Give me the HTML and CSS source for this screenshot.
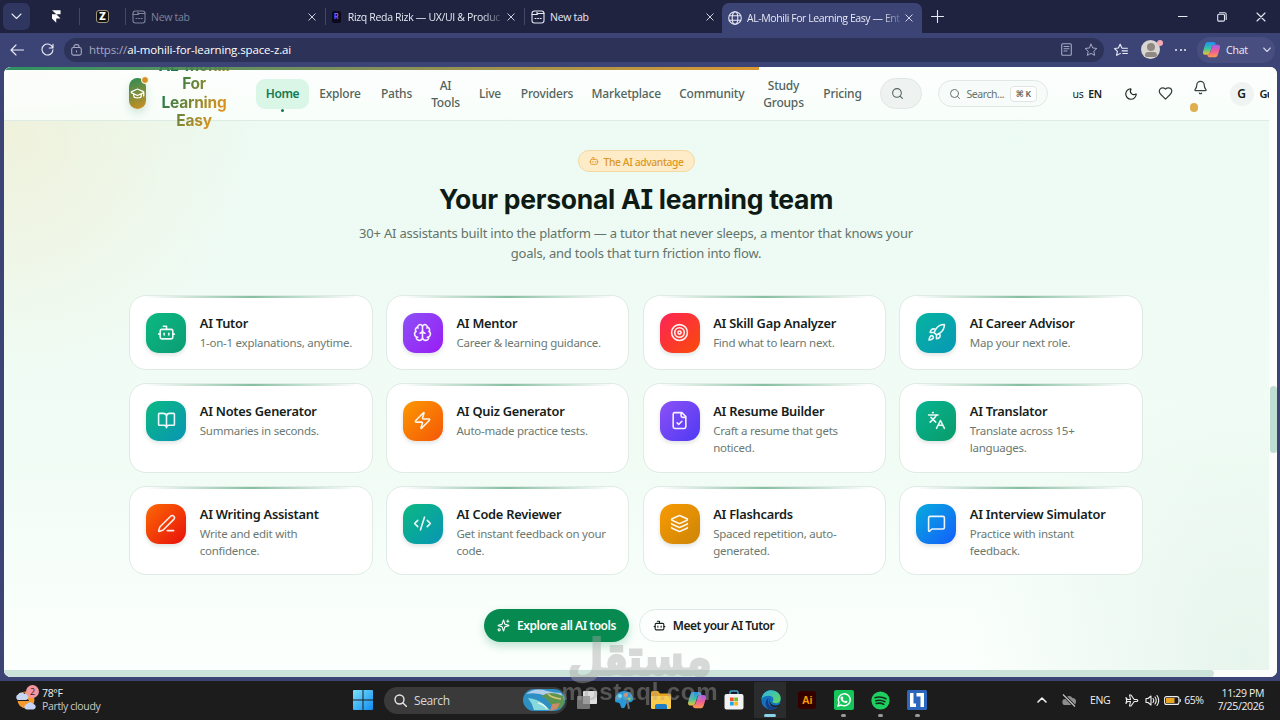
FILE: index.html
```html
<!DOCTYPE html>
<html lang="en">
<head>
<meta charset="utf-8">
<title>AL-Mohili For Learning Easy</title>
<link rel="stylesheet" href="styles.css">
</head>
<body>
<svg class="defs" width="0" height="0">
  <defs>
    <linearGradient id="copilotA" x1="0" y1="0" x2="0" y2="1"><stop offset="0" stop-color="#1f8df5"/><stop offset=".5" stop-color="#35c3a8"/><stop offset="1" stop-color="#f2c230"/></linearGradient>
    <linearGradient id="copilotB" x1="0" y1="0" x2="0" y2="1"><stop offset="0" stop-color="#a35cf0"/><stop offset=".5" stop-color="#ef5c9a"/><stop offset="1" stop-color="#fb9a4b"/></linearGradient>
    <linearGradient id="edgeA" x1="0" y1="0" x2="1" y2="1"><stop offset="0" stop-color="#2bb5e8"/><stop offset="1" stop-color="#62d957"/></linearGradient>
    <linearGradient id="winA" x1="0" y1="0" x2="1" y2="1"><stop offset="0" stop-color="#7be0fb"/><stop offset="1" stop-color="#0f8df0"/></linearGradient>
  </defs>
  <symbol id="bot" viewBox="0 0 24 24"><path d="M12 8V4H8"/><rect width="16" height="12" x="4" y="8" rx="2"/><path d="M2 14h2M20 14h2M15 13v2M9 13v2"/></symbol>
  <symbol id="brain" viewBox="0 0 24 24"><path d="M12 18V5M15 13a4.17 4.17 0 0 1-3-4 4.17 4.17 0 0 1-3 4M17.598 6.5A3 3 0 1 0 12 5a3 3 0 1 0-5.598 1.5M17.997 5.125a4 4 0 0 1 2.526 5.77M18 18a4 4 0 0 0 2-7.464M19.967 17.483A4 4 0 1 1 12 18a4 4 0 1 1-7.967-.517M6 18a4 4 0 0 1-2-7.464M6.003 5.125a4 4 0 0 0-2.526 5.77"/></symbol>
  <symbol id="target" viewBox="0 0 24 24"><circle cx="12" cy="12" r="10"/><circle cx="12" cy="12" r="6"/><circle cx="12" cy="12" r="2"/></symbol>
  <symbol id="rocket" viewBox="0 0 24 24"><path d="M4.5 16.5c-1.5 1.26-2 5-2 5s3.74-.5 5-2c.71-.84.7-2.13-.09-2.91a2.18 2.18 0 0 0-2.91-.09zM12 15l-3-3a22 22 0 0 1 2-3.95A12.88 12.88 0 0 1 22 2c0 2.72-.78 7.5-6 11a22.35 22.35 0 0 1-4 2zM9 12H4s.55-3.03 2-4c1.62-1.08 5 0 5 0M12 15v5s3.03-.55 4-2c1.08-1.62 0-5 0-5"/></symbol>
  <symbol id="book" viewBox="0 0 24 24"><path d="M12 7v14M3 18a1 1 0 0 1-1-1V4a1 1 0 0 1 1-1h5a4 4 0 0 1 4 4 4 4 0 0 1 4-4h5a1 1 0 0 1 1 1v13a1 1 0 0 1-1 1h-6a3 3 0 0 0-3 3 3 3 0 0 0-3-3z"/></symbol>
  <symbol id="zap" viewBox="0 0 24 24"><path d="M4 14a1 1 0 0 1-.78-1.63l9.9-10.2a.5.5 0 0 1 .86.46l-1.92 6.02A1 1 0 0 0 13 10h7a1 1 0 0 1 .78 1.63l-9.9 10.2a.5.5 0 0 1-.86-.46l1.92-6.02A1 1 0 0 0 11 14z"/></symbol>
  <symbol id="file" viewBox="0 0 24 24"><path d="M15 2H6a2 2 0 0 0-2 2v16a2 2 0 0 0 2 2h12a2 2 0 0 0 2-2V7ZM14 2v4a2 2 0 0 0 2 2h4M9 15l2 2 4-4"/></symbol>
  <symbol id="lang" viewBox="0 0 24 24"><path d="m5 8 6 6M4 14l6-6 2-3M2 5h12M7 2h1M22 22l-5-10-5 10M14 18h6"/></symbol>
  <symbol id="pen" viewBox="0 0 24 24"><path d="M13 21h8M21.174 6.812a1 1 0 0 0-3.986-3.987L3.842 16.174a2 2 0 0 0-.5.83l-1.321 4.352a.5.5 0 0 0 .623.622l4.353-1.32a2 2 0 0 0 .83-.497z"/></symbol>
  <symbol id="code" viewBox="0 0 24 24"><path d="m18 16 4-4-4-4M6 8l-4 4 4 4M14.5 4l-5 16"/></symbol>
  <symbol id="layers" viewBox="0 0 24 24"><path d="M12.83 2.18a2 2 0 0 0-1.66 0L2.6 6.08a1 1 0 0 0 0 1.83l8.58 3.91a2 2 0 0 0 1.66 0l8.58-3.9a1 1 0 0 0 0-1.83zM2 12a1 1 0 0 0 .58.91l8.6 3.91a2 2 0 0 0 1.65 0l8.58-3.9A1 1 0 0 0 22 12M2 17a1 1 0 0 0 .58.91l8.6 3.91a2 2 0 0 0 1.65 0l8.58-3.9A1 1 0 0 0 22 17"/></symbol>
  <symbol id="message" viewBox="0 0 24 24"><path d="M22 17a2 2 0 0 1-2 2H6.828a2 2 0 0 0-1.414.586l-2.202 2.202A.71.71 0 0 1 2 21.286V5a2 2 0 0 1 2-2h16a2 2 0 0 1 2 2z"/></symbol>
  <symbol id="sparkles" viewBox="0 0 24 24"><path d="M9.937 15.5A2 2 0 0 0 8.5 14.063l-6.135-1.582a.5.5 0 0 1 0-.962L8.5 9.936A2 2 0 0 0 9.937 8.5l1.582-6.135a.5.5 0 0 1 .963 0L14.063 8.5A2 2 0 0 0 15.5 9.937l6.135 1.581a.5.5 0 0 1 0 .964L15.5 14.063a2 2 0 0 0-1.437 1.437l-1.582 6.135a.5.5 0 0 1-.963 0zM20 2v4M22 4h-4"/><circle cx="4" cy="20" r="2"/></symbol>
  <symbol id="search" viewBox="0 0 24 24"><circle cx="11" cy="11" r="8"/><path d="m21 21-4.3-4.3"/></symbol>
  <symbol id="x" viewBox="0 0 10 10"><path d="M1 1l8 8M9 1l-8 8"/></symbol>
  <symbol id="newtab" viewBox="0 0 14 14"><rect x="1" y="1" width="12" height="12" rx="2.5"/><path d="M1 4.500h5l1-1h6M6 4.500V2M4 8.500h1M6.600 8.500h1M9.200 8.500h1"/></symbol>
  <symbol id="copilot" viewBox="0 0 20 20"><path fill="url(#copilotA)" stroke="none" d="M6 2h6c1.500 0 2 .8 2.300 2l.3 1h-2c-1.500 0-2 1-2.500 2.600L8.600 12.500C8 14.500 7 15.500 5.200 15.500H3.500C1 15.500.6 13.800 1.300 11.500L3.200 5C3.800 3 4.500 2 6 2z"/><path fill="url(#copilotB)" stroke="none" d="M14 18.200H8.300c-1.500 0-2.200-.8-2.600-2.200l-.2-.6c1.800 0 2.900-1 3.400-2.800l1.500-5C10.900 5.800 11.800 5 13.500 5h3c2.500 0 2.900 1.700 2.200 4L16.800 15.300c-.6 2-1.300 2.900-2.800 2.900z"/></symbol>
</svg>

<div class="tabstrip">
  <span class="tab-menu"><svg class="i" width="11" height="7" viewBox="0 0 11 7"><path d="M1 1l4.500 4.500L10 1"/></svg></span>
  <span class="pin"><svg width="9" height="13" viewBox="0 0 10 14"><path fill="#fff" d="M0 0h9.500v4.600H4.800L9.500 9.200H4.700V14L0 9.200V4.600h4.800z"/></svg></span>
  <i class="sep"></i>
  <span class="pin"><span class="zlogo">Z</span></span>
  <i class="sep"></i>
  <div class="tab t1 muted"><svg class="i" width="14" height="14"><use href="#newtab"/></svg><span class="lbl">New tab</span><svg class="i cx" width="8" height="8"><use href="#x"/></svg></div>
  <i class="sep"></i>
  <div class="tab t2"><span class="rlogo">R</span><span class="lbl fade">Rizq Reda Rizk — UX/UI &amp; Produc</span><svg class="i cx" width="8" height="8"><use href="#x"/></svg></div>
  <i class="sep"></i>
  <div class="tab t3"><svg class="i" width="14" height="14"><use href="#newtab"/></svg><span class="lbl">New tab</span><svg class="i cx" width="8" height="8"><use href="#x"/></svg></div>
  <div class="tab t4"><svg class="i" width="14" height="14" viewBox="0 0 14 14"><circle cx="7" cy="7" r="6.300"/><ellipse cx="7" cy="7" rx="2.800" ry="6.300"/><path d="M1.200 4.800h11.600M1.200 9.200h11.600"/></svg><span class="lbl fade">AL-Mohili For Learning Easy — Ent</span><svg class="i cx" width="8" height="8"><use href="#x"/></svg></div>
  <svg class="i plus" width="13" height="13" viewBox="0 0 13 13"><path d="M6.500 .5v12M.5 6.500h12"/></svg>
  <div class="winctl">
    <svg class="i" width="10" height="10" viewBox="0 0 10 10"><path d="M0 4.500h9"/></svg>
    <svg class="i" width="10" height="10" viewBox="0 0 10 10"><rect x=".7" y="2.300" width="6.800" height="6.800" rx="1.200"/><path d="M2.500 .7H7.500a1.700 1.700 0 0 1 1.700 1.700V7.400"/></svg>
    <svg class="i" width="10" height="10"><use href="#x"/></svg>
  </div>
</div>

<div class="toolbar">
  <svg class="i" width="14" height="12" viewBox="0 0 14 12"><path d="M13.500 6H1M6 1L1 6l5 5"/></svg>
  <svg class="i" width="13" height="13" viewBox="0 0 13 13"><path d="M11.800 5A5.500 5.500 0 1 0 12 6.700M12 1.200V5H8.200"/></svg>
  <div class="address">
    <svg class="i dim" width="11" height="12" viewBox="0 0 11 12"><rect x=".7" y="3.500" width="9.600" height="7.600" rx="1.800"/><path d="M3 3.500V2.600a2 2 0 0 1 2-2h1a2 2 0 0 1 2 2v.9M5.500 6.700v1.200"/></svg>
    <span class="url"><span>https://</span>al-mohili-for-learning.space-z.ai</span>
    <svg class="i dim" width="11" height="13" viewBox="0 0 11 13"><rect x=".7" y=".7" width="9.600" height="11.600" rx="1"/><path d="M3 3.500h5M3 5.800h5M3 8h3"/></svg>
    <svg class="i dim" width="14" height="14" viewBox="0 0 24 24"><path stroke-width="1.700" d="M12 2l3 6.500 7 .9-5.200 4.800 1.400 7L12 17.800 5.800 21.200l1.400-7L2 9.400l7-.9z"/></svg>
  </div>
  <svg class="i" width="14" height="14" viewBox="0 0 24 24"><path stroke-width="1.900" d="M15 9.200L13.500 8.500 10.500 2 7.500 8.500 1 9.400l4.800 4.800-1.300 7L11 17.800M15 9h8M14 13.500h9M15 18h8"/></svg>
  <span class="avatar"><i></i><b></b><em></em></span>
  <span class="dots"><i></i><i></i><i></i></span>
  <div class="chat"><svg width="19" height="19"><use href="#copilot"/></svg><span>Chat</span><svg class="i dim" width="8" height="6" viewBox="0 0 8 6"><path d="M.7 1L4 4.500 7.300 1"/></svg></div>
</div>

<div class="frame">
  <div class="viewport">
    <div class="page">
      <header class="nav">
        <div class="logo"><svg class="i" width="15" height="15" viewBox="0 0 24 24"><path stroke-width="2" d="M21.420 10.922a1 1 0 0 0-.019-1.838L12.830 5.180a2 2 0 0 0-1.660 0L2.600 9.080a1 1 0 0 0 0 1.832l8.570 3.908a2 2 0 0 0 1.660 0zM22 10v6M6 12.500V16a6 3 0 0 0 12 0v-3.500"/></svg><i></i></div>
        <div class="brand">AL-Mohili<br>For<br>Learning<br>Easy</div>
        <nav class="links">
          <a class="active">Home</a><a>Explore</a><a>Paths</a><a>AI<br>Tools</a><a>Live</a><a>Providers</a><a>Marketplace</a><a>Community</a><a>Study<br>Groups</a><a>Pricing</a>
        </nav>
        <span class="mini"><svg class="i" width="13" height="13"><use href="#search"/></svg></span>
        <div class="searchbox"><svg class="i" width="12" height="12"><use href="#search"/></svg><span>Search...</span><kbd>⌘ K</kbd></div>
        <span class="locale"><span>us</span> EN</span>
        <svg class="i moon" width="14" height="14" viewBox="0 0 24 24"><path d="M20.985 12.486a9 9 0 1 1-9.473-9.472c.405-.022.617.46.402.803a6 6 0 0 0 8.268 8.268c.344-.215.825-.004.803.401"/></svg>
        <svg class="i heart" width="15" height="15" viewBox="0 0 24 24"><path d="M19 14c1.490-1.460 3-3.210 3-5.500A5.500 5.500 0 0 0 16.500 3c-1.760 0-3 .5-4.500 2-1.500-1.500-2.740-2-4.500-2A5.500 5.500 0 0 0 2 8.500c0 2.300 1.500 4.050 3 5.500l7 7z"/></svg>
        <span class="bell"><svg class="i" width="15" height="15" viewBox="0 0 24 24"><path d="M10.268 21a2 2 0 0 0 3.464 0M3.262 15.326A1 1 0 0 0 4 17h16a1 1 0 0 0 .74-1.673C19.410 13.956 18 12.499 18 8A6 6 0 0 0 6 8c0 4.499-1.411 5.956-2.738 7.326"/></svg><i></i></span>
        <span class="user">G</span>
        <span class="uname">Gu</span>
      </header>

      <main>
        <div class="pill"><svg class="i" width="10" height="10"><use href="#bot"/></svg><span>The AI advantage</span></div>
        <h1>Your personal AI learning team</h1>
        <p class="lead">30+ AI assistants built into the platform — a tutor that never sleeps, a mentor that knows your<br>goals, and tools that turn friction into flow.</p>

        <div class="grid">
          <article class="card"><span class="tile emerald"><svg class="i" width="19" height="19"><use href="#bot"/></svg></span><div><h3>AI Tutor</h3><p>1-on-1 explanations, anytime.</p></div></article>
          <article class="card"><span class="tile violet"><svg class="i" width="19" height="19"><use href="#brain"/></svg></span><div><h3>AI Mentor</h3><p>Career &amp; learning guidance.</p></div></article>
          <article class="card"><span class="tile rose"><svg class="i" width="19" height="19"><use href="#target"/></svg></span><div><h3>AI Skill Gap Analyzer</h3><p>Find what to learn next.</p></div></article>
          <article class="card"><span class="tile teal"><svg class="i" width="19" height="19"><use href="#rocket"/></svg></span><div><h3>AI Career Advisor</h3><p>Map your next role.</p></div></article>
          <article class="card"><span class="tile sea"><svg class="i" width="19" height="19"><use href="#book"/></svg></span><div><h3>AI Notes Generator</h3><p>Summaries in seconds.</p></div></article>
          <article class="card"><span class="tile orange"><svg class="i" width="19" height="19"><use href="#zap"/></svg></span><div><h3>AI Quiz Generator</h3><p>Auto-made practice tests.</p></div></article>
          <article class="card"><span class="tile indigo"><svg class="i" width="19" height="19"><use href="#file"/></svg></span><div><h3>AI Resume Builder</h3><p>Craft a resume that gets<br>noticed.</p></div></article>
          <article class="card"><span class="tile green"><svg class="i" width="19" height="19"><use href="#lang"/></svg></span><div><h3>AI Translator</h3><p>Translate across 15+<br>languages.</p></div></article>
          <article class="card"><span class="tile red"><svg class="i" width="19" height="19"><use href="#pen"/></svg></span><div><h3>AI Writing Assistant</h3><p>Write and edit with<br>confidence.</p></div></article>
          <article class="card"><span class="tile sea"><svg class="i" width="19" height="19"><use href="#code"/></svg></span><div><h3>AI Code Reviewer</h3><p>Get instant feedback on your<br>code.</p></div></article>
          <article class="card"><span class="tile amber"><svg class="i" width="19" height="19"><use href="#layers"/></svg></span><div><h3>AI Flashcards</h3><p>Spaced repetition, auto-<br>generated.</p></div></article>
          <article class="card"><span class="tile blue"><svg class="i" width="19" height="19"><use href="#message"/></svg></span><div><h3>AI Interview Simulator</h3><p>Practice with instant<br>feedback.</p></div></article>
        </div>

        <div class="cta">
          <a class="btn primary"><svg class="i" width="13" height="13"><use href="#sparkles"/></svg><span>Explore all AI tools</span></a>
          <a class="btn ghost"><svg class="i" width="13" height="13"><use href="#bot"/></svg><span>Meet your AI Tutor</span></a>
        </div>
      </main>
    </div>
    <div class="vbar"><i></i></div>
    <div class="hbar"><i></i></div>
    <div class="progress"></div>
  </div>
</div>

<div class="taskbar">
  <div class="weather">
    <svg width="24" height="24" viewBox="0 0 24 24"><circle cx="11" cy="12" r="8.500" fill="#f29a2e"/><path fill="#1c1c1c" d="M2 13l7-9 5 9z"/><path fill="#c8d4f4" d="M3 12a3 3 0 0 1 0-5.500A4 4 0 0 1 9.500 6a3 3 0 0 1 1.500 6zM11.500 21.500a2.800 2.800 0 0 1 .5-5.500 4 4 0 0 1 6.500 0 2.800 2.800 0 0 1 0 5.500z"/></svg>
    <b class="badge">2</b>
    <div><span>78°F</span><span class="cloud">Partly cloudy</span></div>
  </div>
  <svg class="start" width="20" height="20" viewBox="0 0 20 20"><path fill="url(#winA)" d="M0 1q0-1 1-1h8.500v9.500H0zM10.500 0H19q1 0 1 1v8.500h-9.500zM0 10.500h9.500V20H1q-1 0-1-1zM10.500 10.500H20V19q0 1-1 1h-8.500z"/></svg>
  <div class="tsearch"><svg class="i" width="13" height="13" viewBox="0 0 13 13"><circle cx="5.500" cy="5.500" r="4.500"/><path d="M9 9l3.500 3.500"/></svg><span>Search</span>
    <svg class="scene" width="42" height="22" viewBox="0 0 42 22"><rect width="42" height="22" rx="11" fill="#2d8fc4"/><path d="M3 5Q12-2 24 2q8 2 14 2l3 5q-14 2-18-2Q14 3 3 5z" fill="#b4cde8"/><path d="M18 7q10-6 22 0l2 6-5 7q-6-4-11-6-1-4-8-7z" fill="#5d9550"/><path d="M25 5q4 4 13 5" stroke="#dcc47b" stroke-width="1.500" fill="none"/><path d="M5 9q9 1 14 5t8 7H11q-2-7-6-12z" fill="#87d9dc"/><path d="M15 14q6 1 9 6" stroke="#dff5ee" stroke-width="1.500" fill="none"/><path d="M29 15l8-1-3 6-7 2z" fill="#c88b65"/></svg>
  </div>
  <div class="apps">
    <span><svg width="20" height="20" viewBox="0 0 20 20"><rect x="0" y="6" width="13" height="13" rx="1" fill="#747474"/><rect x="6" y="1" width="14" height="13" rx="1" fill="#dedede"/><rect x="6" y="6" width="7" height="8" fill="#9d9d9d"/></svg></span>
    <span><svg width="20" height="20" viewBox="0 0 20 20"><path fill="#2997d8" d="M10 1c5 0 9 3 9 8 0 4-4 3-6 4s-1 6-5 5c-2-1-1-4-3-5-2-.5-4 0-4-3 0-5 4-9 9-9z"/><circle cx="6" cy="6" r="2" fill="#6fe0f8"/><circle cx="12" cy="5" r="2" fill="#f48752"/><circle cx="15" cy="9" r="1.800" fill="#70d777"/><path d="M13 9l2 10" stroke="#6b737b" stroke-width="2"/></svg></span>
    <span><svg width="20" height="20" viewBox="0 0 20 20"><path fill="#e7a321" d="M0 2.500q0-1.500 1.500-1.500H7l2 2.500h9.500Q20 3.500 20 5v3H0z"/><path fill="#fdcb4b" d="M0 6h20v11.500q0 1.500-1.500 1.500h-17Q0 19 0 17.500z"/><path fill="#1c7fc8" d="M4 19v-3q0-2 2-2h8q2 0 2 2v3z"/></svg></span>
    <span><svg width="20" height="20"><use href="#copilot"/></svg></span>
    <span><svg width="20" height="20" viewBox="0 0 20 20"><path d="M6 5V2.500Q6 1 7.500 1h5Q14 1 14 2.500V5" stroke="#3ba4d6" stroke-width="1.500" fill="none"/><rect y="4" x=".5" width="19" height="15.500" rx="2" fill="#f2f2f2"/><path fill="#f05125" d="M6 7.500h3.700v3.700H6z"/><path fill="#7cba28" d="M10.300 7.500H14v3.700h-3.700z"/><path fill="#22a3ea" d="M6 11.800h3.700v3.700H6z"/><path fill="#fdb813" d="M10.300 11.800H14v3.700h-3.700z"/></svg></span>
    <span class="on"><svg width="20" height="20" viewBox="0 0 20 20"><circle cx="10" cy="10" r="9.700" fill="#1671bf"/><path fill="url(#edgeA)" d="M.4 9.500C1 4 5 .3 10 .3c6 0 9.700 4 9.700 8 0 3-2 5-5 5-2 0-3.300-.8-3.300-1.500s1-1 1-2.600c0-2-2-3.500-4.700-3.500C4 5.700 1 7.500.4 9.500z"/><path fill="#123f88" d="M7.500 8c-2 6 2 10 8 9.500-2 2-5 2.500-7.500 1.800C4.500 17 3 11 7.500 8z"/><path fill="#1c1c1c" d="M9 8.500c-1.500 4 2 7.500 6.500 7 1.500-.2 2.700-.7 3.500-1.500.4 0 .2.500 0 1-3 3.500-8 2.500-9.800-.5C8 12.500 8 10 9 8.500z"/></svg></span>
    <span><b class="ai">Ai</b></span>
    <span class="run"><svg width="20" height="20" viewBox="0 0 20 20"><rect width="20" height="20" rx="2" fill="#15c45b"/><path d="M4 16l1-3.300A6 6 0 1 1 7.300 15z" fill="none" stroke="#fff" stroke-width="1.400"/><path fill="#fff" d="M7.500 6.500l1.200 0 .7 1.800-.7 1c.5 1 1.200 1.600 2.200 2l.9-.9 1.700.8c.1 1.200-1 2-2.200 1.800-2.700-.5-4.800-2.800-4.800-5 0-.8.500-1.400 1-1.500z"/></svg></span>
    <span class="run"><svg width="19" height="19" viewBox="0 0 20 20"><circle cx="10" cy="10" r="9.600" fill="#1ed05f"/><path d="M4.300 7q6-1.800 11.500 1.200M5 10.200q5-1.500 9.700 1.100M5.500 13.200q4.500-1.200 8 .9" stroke="#172b1d" stroke-width="1.600" stroke-linecap="round" fill="none"/></svg></span>
    <span class="run"><svg width="20" height="20" viewBox="0 0 20 20"><rect width="20" height="20" rx="1.500" fill="#2c67bd"/><path fill="#fff" d="M3 3h3.500v10.500H9V17H3zM9.500 3H17v14h-3.500V6.500h-4z"/></svg></span>
  </div>
  <div class="tray">
    <svg class="i up" width="10" height="6" viewBox="0 0 10 6"><path stroke-width="1.600" d="M1 5l4-4 4 4"/></svg>
    <svg class="off" width="14" height="13" viewBox="0 0 14 13"><path fill="#8c8c8c" d="M3.500 11a3 3 0 0 1-.3-6A4 4 0 0 1 10.500 4a3.500 3.500 0 0 1 0 7z"/><path d="M1 .5l12 12" stroke="#1c1c1c" stroke-width="3"/><path d="M1 .5l12 12" stroke="#ccc" stroke-width="1.100"/></svg>
    <span class="eng">ENG</span>
    <svg class="i plane" width="14" height="13" viewBox="0 0 14 13"><path d="M1 3.500l1.500 2h3L4.500 1H6l3.200 4.500h2.600a1 1 0 0 1 0 2H9.200L6 12H4.500l1-4.500h-3L1 9.500l.6-3z"/></svg>
    <svg class="i vol" width="15" height="13" viewBox="0 0 15 13"><path d="M1 4.500h2L6 2v9L3 8.500H1zM8 4.500q1.500 2 0 4M10 3q2.500 3.500 0 7M12 1.500q3.500 5 0 10"/></svg>
    <svg class="batt" width="17" height="9" viewBox="0 0 17 9"><rect x=".6" y=".6" width="14.300" height="7.800" rx="2" fill="none" stroke="#eee" stroke-width="1.100"/><rect x="2" y="2" width="8.500" height="5" fill="#eaa520"/><path d="M16.200 3v3" stroke="#eee" stroke-width="1.200"/></svg>
    <span class="pct">65%</span>
    <div class="clock"><span>11:29 PM</span><span>7/25/2026</span></div>
  </div>
</div>

<div class="watermark"><span class="ar" lang="ar">مستقل</span><span class="en">mostaql.com</span></div>
</body>
</html>
```
FILE: styles.css
```css
* { box-sizing: border-box; }
body { margin: 0; width: 1280px; height: 720px; overflow: hidden; display: flex; flex-direction: column; background: #3c4475; font-family: "Noto Sans", "Open Sans", sans-serif; }
h1, h3, p { margin: 0; }
.defs { position: absolute; }
.i { fill: none; stroke: currentColor; stroke-width: 1.1; stroke-linecap: round; stroke-linejoin: round; flex: none; }

/* Browser chrome */
.tabstrip { height: 33px; flex: none; display: flex; align-items: center; background: #1f2340; color: #e6e8f4; font: 10.5px "Open Sans", sans-serif; }
.tab-menu { width: 27px; height: 27px; margin: 0 13px 0 3px; border-radius: 6px; background: #2f3660; display: grid; place-items: center; }
.pin { width: 27px; display: grid; place-items: center; }
.sep { width: 1px; height: 17px; background: #424766; margin: 0 9px; flex: none; }
.sep + .tab { margin-left: -3px; }
.zlogo { width: 13px; height: 13px; border: 1px solid #a39a83; border-radius: 3px; background: #111; color: #fff; font: 900 10px/11px "Inter", sans-serif; text-align: center; }
.rlogo { width: 12px; height: 12px; border-radius: 2px; background: #0b0a1c; color: #8a5cf0; font: 700 7px/12px "Inter", sans-serif; text-align: center; }
.tab { display: flex; align-items: center; gap: 5px; height: 31px; flex: none; }
.tab .lbl { flex: 1; white-space: nowrap; letter-spacing: -.27px; }
.tab .fade { -webkit-mask-image: linear-gradient(90deg, #000 88%, rgba(0, 0, 0, .2)); mask-image: linear-gradient(90deg, #000 88%, rgba(0, 0, 0, .2)); }
.t1 { width: 184px; }
.t1.muted .lbl, .t1.muted > .i:first-child { color: #7e829a; }
.t2 { width: 183px; gap: 7px; }
.t2 .lbl { letter-spacing: -.32px; }
.tab.t4 .lbl { letter-spacing: -.42px; }
.t3 { width: 183px; }
.t4 { width: 200px; margin-left: 8px; padding: 0 9px 0 6px; background: #3c4475; border-radius: 7px 7px 0 0; align-self: flex-end; height: 30px; }
.plus { margin-left: 9px; }
.winctl { margin-left: auto; padding-right: 14px; display: flex; gap: 29px; }

.toolbar { height: 34px; flex: none; display: flex; align-items: center; padding: 0 0 1px 10px; gap: 17px; color: #eceef8; background: #3c4475; font: 11.500px "Open Sans", sans-serif; }
.address { width: 1040px; height: 24px; border-radius: 12px; background: #2d3358; display: flex; align-items: center; gap: 12px; padding: 0 6px 0 7px; margin-left: -7px; flex: none; }
.address .url { flex: 1; margin-left: -5px; letter-spacing: -.13px; color: #fff; }
.address .url span, .dim { color: #a5a9c3; }
.address + .i { margin-left: -7px; }
.avatar { position: relative; width: 19px; height: 19px; border-radius: 50%; background: #d9d6d1; display: flex; flex-direction: column; align-items: center; margin-left: -4px; flex: none; }
.avatar i { width: 8px; height: 8px; border-radius: 50%; background: #8f8883; margin-top: 3px; }
.avatar b { width: 12px; height: 5px; border-radius: 6px 6px 3px 3px; background: #8f8883; margin-top: 1px; }
.avatar em { position: absolute; right: -3px; top: 0; width: 6px; height: 6px; border-radius: 50%; background: #f5aab4; }
.dots { display: flex; gap: 2.500px; margin-left: -2px; }
.dots i { width: 2px; height: 2px; border-radius: 50%; background: #eceef8; }
.chat { width: 78px; height: 26px; border-radius: 13px; background: #484f80; display: flex; align-items: center; padding-left: 5px; gap: 5px; margin-left: -6px; font-size: 10.500px; letter-spacing: -.2px; flex: none; }
.chat .dim { margin-left: 10px; color: #cfd2e6; }

.frame { height: 614px; flex: none; padding: 0 3px 4px 4px; background: #3c4475; }
.viewport { position: relative; height: 610px; border-radius: 7px; overflow: hidden; background: #fff; display: grid; grid-template: 603px 7px / 1265px 8px; }
.progress { position: absolute; left: 0; top: 0; width: 755px; height: 3px; background: linear-gradient(90deg, #178453, #778447 50%, #d68d1d); opacity: .9; }
.vbar { padding-top: 319px; background: #fafdfc; grid-row: 1 / 3; grid-column: 2; }
.vbar i { display: block; height: 67px; width: 7px; margin-left: 1px; border-radius: 4px; background: #bfded2; }
.hbar { background: #fafdfc; grid-row: 2; grid-column: 1; }
.hbar i { display: block; width: 1210px; height: 7px; background: #cbe3d8; border-radius: 0 4px 4px 0; }
.page { overflow: hidden; background: radial-gradient(ellipse 250px 250px at 0 65px, rgba(244, 228, 184, .4), transparent), radial-gradient(ellipse 270px 260px at 1240px 590px, rgba(210, 235, 221, .5), transparent), linear-gradient(#ebfaf2 0, #eefbf4 180px, #f1fcf5 400px, #fafffc 560px, #fbfffd); }

/* Site header */
.nav { height: 54px; display: flex; align-items: center; padding-left: 125px; background: linear-gradient(rgba(255, 255, 255, .9), rgba(250, 255, 252, .8)); border-bottom: 1px solid #dcebe3; color: #53635b; font-size: 12px; font-weight: 500; }
.nav > * { flex: none; }
.logo { position: relative; width: 17px; height: 31px; border-radius: 8.500px; background: linear-gradient(160deg, #2b8b56, #d08f20); display: grid; place-items: center; color: #fff; box-shadow: 0 4px 8px rgba(30, 130, 80, .2); }
.logo i { position: absolute; right: -3px; top: -2px; width: 8px; height: 8px; border-radius: 50%; background: #d7921f; border: 1px solid #fff; }
.brand { width: 94px; margin: 0 8px 0 1px; text-align: center; font: 700 15.500px/18.500px "Inter", sans-serif; letter-spacing: -.25px; color: transparent; background: linear-gradient(120deg, #16794c 25%, #d9921c 75%); -webkit-background-clip: text; background-clip: text; }
.links { display: grid; grid-template-columns: 53px 62px 51px 47px 42px 72px 86.500px 84.500px 59px 59px; align-items: center; text-align: center; line-height: 16.500px; letter-spacing: -.19px; margin-left: 7px; padding-top: 2px; }
.links .active { position: relative; height: 30px; line-height: 30px; margin-top: -2px; border-radius: 9px; background: #d9f6e6; color: #157a51; font-weight: 600; letter-spacing: -.4px; }
.links .active::after { content: ""; position: absolute; left: 25px; top: 30px; width: 3px; height: 3px; border-radius: 50%; background: #157a51; }
.nav .i { stroke-width: 2; }
.mini { width: 42px; height: 31px; margin-left: 7.500px; border: 1px solid #e1e8e4; border-radius: 16px; background: #eef2f0; display: flex; align-items: center; padding-left: 10px; }
.searchbox { width: 110px; height: 27px; margin-left: 16px; border: 1px solid #dfe8e3; border-radius: 14px; background: #f7fbf9; display: flex; align-items: center; padding: 0 10px 0 10px; gap: 6px; font-size: 10.500px; letter-spacing: -.45px; font-weight: 400; color: #65736c; }
.searchbox kbd { margin-left: auto; width: 27px; height: 16px; border: 1px solid #dfe6e2; border-radius: 4px; background: #fff; font: 600 8.500px/14px "Noto Sans", "DejaVu Sans", sans-serif; letter-spacing: 0; text-align: center; color: #4f5d56; }
.locale { margin-left: 25px; width: 51px; color: #17211c; font-size: 10.500px; font-weight: 600; letter-spacing: -.2px; }
.locale span { font-weight: 400; margin-right: 2px; }
.moon { color: #1c2822; }
.heart { margin-left: 20px; color: #35433c; }
.bell { margin-left: 20px; width: 16px; display: flex; flex-direction: column; gap: 8px; color: #35433c; height: 27px; }
.bell i { width: 8.500px; height: 8.500px; border-radius: 50%; background: #dfae4f; margin-left: -3px; flex: none; }
.user { margin-left: 21px; width: 24px; height: 24px; border-radius: 50%; background: #eff3f1; text-align: center; line-height: 24px; font-size: 12px; font-weight: 600; color: #14201a; }
.uname { margin-left: 6px; font-size: 11px; letter-spacing: -.8px; font-weight: 600; color: #14201a; }

/* AI tools section */
main { display: flex; flex-direction: column; align-items: center; width: 1264px; }
.pill { margin-top: 29px; width: 117px; height: 22px; border: 1px solid #f3d9a3; border-radius: 11px; background: #feebc8; color: #dc971f; display: flex; align-items: center; justify-content: center; gap: 5px; font-size: 10.300px; line-height: 18px; font-weight: 500; letter-spacing: -.38px; white-space: nowrap; }
.pill span { padding-top: 1px; }
.pill .i { stroke-width: 2; }
h1 { margin-top: 10px; height: 34px; font: 700 26.500px/34px "Inter", sans-serif; font-feature-settings: "cv08"; letter-spacing: -.28px; color: #0e1a14; white-space: nowrap; }
.lead { margin-top: 7px; text-align: center; font-size: 13px; line-height: 20px; letter-spacing: -.21px; color: #64736b; white-space: nowrap; }
.grid { width: 1013.500px; margin-top: 32px; display: grid; grid-template-columns: repeat(4, 1fr); grid-template-rows: 74.500px 89.500px 88.500px; gap: 13.500px 13.300px; }
.card { position: relative; display: flex; gap: 13.500px; padding: 16.500px 12px 0 16px; border: 1px solid #e0ebe5; border-radius: 17px; background: #fff; overflow: hidden; }
.card::before { content: ""; position: absolute; left: 15px; right: 15px; top: 0; height: 2px; background: linear-gradient(90deg, transparent, #86bfa1, transparent); }
.tile { width: 40px; height: 40px; flex: none; border-radius: 13px; display: grid; place-items: center; color: rgba(255, 255, 255, .92); box-shadow: 0 2px 4px rgba(20, 60, 50, .15); }
.tile .i { stroke-width: 2; }
.card h3 { font-size: 12.800px; line-height: 20px; font-weight: 600; letter-spacing: -.22px; color: #14201a; white-space: nowrap; }
.card p { margin-top: 1.500px; font-size: 11.500px; line-height: 17px; letter-spacing: -.25px; color: #6b7971; white-space: nowrap; }
.emerald { background: linear-gradient(135deg, #0bb981, #0c9c75); }
.violet { background: linear-gradient(135deg, #8b51f6, #9a1cf5); }
.rose { background: linear-gradient(135deg, #fd2358, #f94b08); }
.teal { background: linear-gradient(135deg, #07b49f, #0898b6); }
.sea { background: linear-gradient(135deg, #0bb981, #0895b5); }
.orange { background: linear-gradient(135deg, #fd9800, #f45708); }
.indigo { background: linear-gradient(135deg, #8b51f6, #5039f3); }
.green { background: linear-gradient(135deg, #07b492, #099b69); }
.red { background: linear-gradient(135deg, #fc6904, #e80f0b); }
.amber { background: linear-gradient(135deg, #f99a02, #cc8508); }
.blue { background: linear-gradient(135deg, #06acdc, #155dfc); }
.cta { margin-top: 34px; display: flex; gap: 10px; }
.btn { height: 33px; border-radius: 17px; display: flex; align-items: center; justify-content: center; gap: 7px; font-size: 12px; font-weight: 600; letter-spacing: -.48px; white-space: nowrap; }
.btn span { padding-top: 1px; }
.btn .i { stroke-width: 2; }
.primary { width: 145px; background: #068a50; color: #fff; box-shadow: 0 4px 9px rgba(6, 138, 80, .25); }
.ghost { width: 149px; border: 1px solid #e0eae4; background: #fcfffd; color: #17211c; }

/* Taskbar */
.taskbar { height: 39px; flex: none; display: flex; align-items: center; padding-bottom: 1px; background: #1c1c1c; color: #f0f0f0; font: 10.500px "Open Sans", sans-serif; }
.weather { position: relative; width: 337px; padding-left: 15px; display: flex; gap: 3px; align-items: center; line-height: 13px; letter-spacing: -.35px; }
.weather span { display: block; }
.weather .cloud { color: #c9c9c9; }
.badge { position: absolute; left: 26px; top: -2px; width: 13px; height: 13px; border-radius: 50%; background: #f396a0; color: #41171c; font-size: 9px; line-height: 13px; text-align: center; font-weight: 400; }
.start { margin: 0 11px 0 16px; flex: none; }
.tsearch { width: 183px; height: 27px; border-radius: 14px; background: #3a3a3a; display: flex; align-items: center; padding: 0 2px 0 10px; gap: 7px; font-size: 12px; letter-spacing: -.4px; color: #d8d8d8; }
.tsearch .scene { margin-left: auto; }
.tsearch .i { stroke-width: 1.400; color: #e6e6e6; }
.apps { display: flex; align-items: center; margin-left: 2px; }
.apps > span { position: relative; width: 36.650px; height: 36px; display: grid; place-items: center; flex: none; }
.apps .on { background: linear-gradient(90deg, transparent 2px, #2b2c2e 2px, #2b2c2e 34px, transparent 34px); }
.apps .on::after, .apps .run::after { content: ""; position: absolute; bottom: 1px; left: 12px; width: 12px; height: 3px; border-radius: 2px; background: #8bd3e8; }
.apps .run::after { left: 16px; width: 5px; background: #999; }
.ai { width: 18px; height: 18px; border-radius: 3px; background: #330000; color: #ff9a00; font: 700 10.500px/18px "Liberation Sans", sans-serif; text-align: center; }
.tray { margin-left: auto; padding-right: 16px; display: flex; align-items: center; letter-spacing: -.15px; }
.up { margin-right: 2px; }
.off { margin-left: 13px; }
.eng { margin-left: 14px; letter-spacing: -.4px; }
.plane { margin-left: 15px; }
.vol { margin-left: 6px; }
.batt { margin: 0 3px 0 4px; }
.pct { letter-spacing: -.5px; }
.clock { margin-left: 14px; display: flex; flex-direction: column; text-align: right; line-height: 13px; letter-spacing: -.35px; }

/* Translucent brand mark over the lower edge */
.watermark { position: absolute; left: 560px; top: 632px; width: 160px; height: 80px; opacity: .42; color: #a6a6a6; text-align: center; }
.watermark .ar { position: absolute; left: 0; width: 160px; top: -5px; font: 400 48px/60px "DejaVu Sans", sans-serif; -webkit-text-stroke: 4px #a6a6a6; stroke-linejoin: round; paint-order: stroke; direction: rtl; }
.watermark .en { position: absolute; left: 0; width: 160px; top: 46px; font: 700 24px/28px "Liberation Sans", sans-serif; letter-spacing: .8px; }
```
